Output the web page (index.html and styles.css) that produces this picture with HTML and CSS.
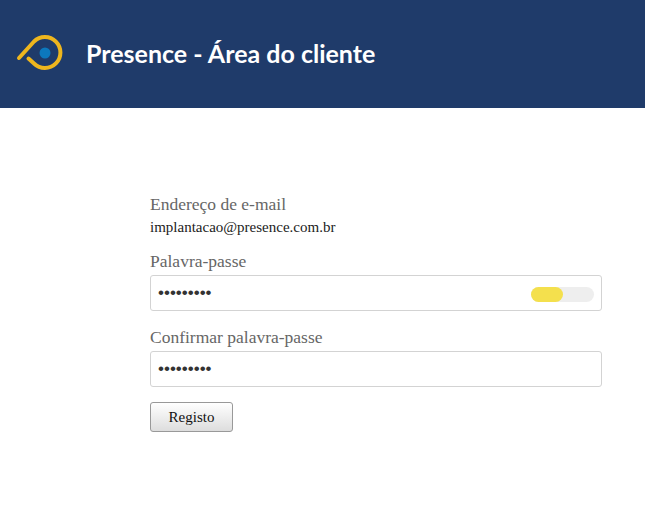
FILE: index.html
```html
<!DOCTYPE html>
<html lang="pt">
<head>
    <meta charset="UTF-8">
    <meta name="viewport" content="width=device-width, initial-scale=1.0">
    <title>Presence - Área do cliente</title>
    <link rel="stylesheet" href="styles.css">
</head>
<body>
    <header class="top-bar">
        <svg class="logo" width="48" height="40" viewBox="0 0 48 40" aria-hidden="true">
            <path d="M3 24 L18 7.500 A15.500 15.500 0 1 1 18 29.500 L12.500 24.500" fill="none" stroke="#eeb61e" stroke-width="4" stroke-linecap="round" stroke-linejoin="round"/>
            <circle cx="29" cy="19" r="5.500" fill="#0c78bd"/>
        </svg>
        <h1>Presence - Área do cliente</h1>
    </header>
    <main class="register">
        <form class="register-form">
            <div class="field-email">
                <label class="field-label">Endereço de e-mail</label>
                <div class="email-value">implantacao@presence.com.br</div>
            </div>
            <div class="field">
                <label class="field-label" for="pass1">Palavra-passe</label>
                <div class="input-wrap">
                    <input type="password" id="pass1" value="123456789">
                    <div class="strength"><div class="strength-fill"></div></div>
                </div>
            </div>
            <div class="field">
                <label class="field-label" for="pass2">Confirmar palavra-passe</label>
                <div class="input-wrap">
                    <input type="password" id="pass2" value="123456789">
                </div>
            </div>
            <button type="submit" class="submit-btn">Registo</button>
        </form>
    </main>
</body>
</html>
```

FILE: styles.css
```css
body {
    margin: 0;
    background-color: #fff;
    font-family: "Liberation Serif", serif;
}

.top-bar {
    background-color: #1f3b6a;
    height: 108px;
    display: flex;
    align-items: center;
    padding-left: 16px;
}

.logo {
    margin-right: 22px;
}

.top-bar h1 {
    margin: -2px 0 0;
    color: #fff;
    font-family: Lato, sans-serif;
    font-size: 25px;
    font-weight: 700;
}

.register {
    padding: 86px 43px 0 150px;
}

.register-form {
    display: flex;
    flex-direction: column;
}

.field-label {
    display: block;
    color: #666;
    font-size: 17.500px;
    line-height: 20px;
}

.email-value {
    font-size: 15px;
    line-height: 18px;
    margin-top: 4px;
    color: #222;
}

.field {
    margin-top: 15px;
}

.field + .field {
    margin-top: 16px;
}

.input-wrap {
    position: relative;
    margin-top: 4px;
}

.input-wrap input {
    display: block;
    box-sizing: border-box;
    width: 100%;
    height: 36px;
    padding: 0 7px;
    border: 1px solid #d3d3d3;
    border-radius: 3px;
    font-size: 17px;
    color: #333;
}

.strength {
    position: absolute;
    top: 12px;
    right: 8px;
    width: 63px;
    height: 15px;
    background-color: #eee;
    border-radius: 8px;
}

.strength-fill {
    width: 32px;
    height: 100%;
    background-color: #f4e04d;
    border-radius: 8px;
}

.submit-btn {
    align-self: flex-start;
    width: 83px;
    height: 30px;
    margin-top: 15px;
    padding: 0;
    border: 1px solid #999;
    border-radius: 3px;
    background: linear-gradient(#fff, #ddd);
    font-family: "Liberation Serif", serif;
    font-size: 15px;
    color: #111;
}
```
